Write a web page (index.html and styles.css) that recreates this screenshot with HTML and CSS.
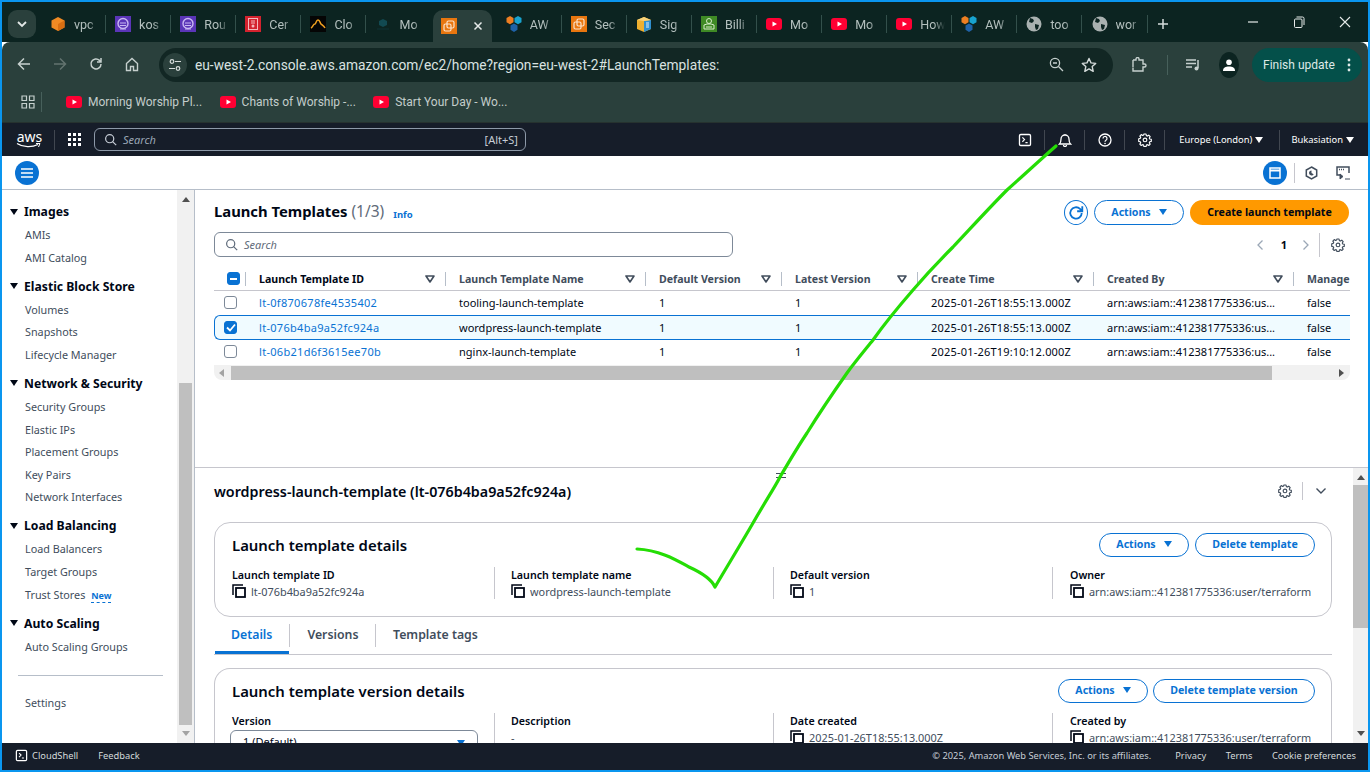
FILE: index.html
```html
<!DOCTYPE html>
<html>
<head>
<meta charset="UTF-8">
<title>Launch Templates | EC2 | eu-west-2</title>
<link rel="stylesheet" href="styles.css">
</head>
<body>

<svg class="defs" width="0" height="0">
  <symbol id="i-vpc" viewBox="0 0 16 16"><path d="M8 1l6.500 3.500v7L8 15l-6.500-3.500v-7z" fill="#f08a24"/><path d="M8 8l6.500-3.500v7L8 15z" fill="#d96f12"/></symbol>
  <symbol id="i-kos" viewBox="0 0 16 16"><rect width="16" height="16" fill="#5b35b8"/><circle cx="8" cy="7.500" r="5" fill="none" stroke="#c9b8f2" stroke-width="1.400"/><path d="M5 7h6M5 9.500h6" stroke="#c9b8f2"/><path d="M5 13h6" stroke="#c9b8f2"/></symbol>
  <symbol id="i-cer" viewBox="0 0 16 16"><rect width="16" height="16" fill="#d4222e"/><rect x="3.500" y="2.500" width="9" height="11" fill="none" stroke="#f4b8bc"/><path d="M6 5h4M6 7h4" stroke="#f4b8bc"/><circle cx="8" cy="10" r="1.500" fill="#f4b8bc"/></symbol>
  <symbol id="i-clo" viewBox="0 0 16 16"><rect width="16" height="16" fill="#050505"/><path d="M1 12c2-1 2-4 4-4 1 0 1-4 3-4s2 3 3 4 3 2 4 4" fill="none" stroke="#f0a020" stroke-width="1.500"/></symbol>
  <symbol id="i-mon" viewBox="0 0 16 16"><path d="M8 3l4 2v4l-4 2-4-2V5z" fill="#124a52"/><path d="M2 13h12" stroke="#0f3237"/></symbol>
  <symbol id="i-ec2" viewBox="0 0 16 16"><rect width="16" height="16" fill="#e8760f"/><rect x="6" y="3" width="7" height="7" rx="1.500" fill="none" stroke="#fbe3cc" stroke-width="1.200"/><rect x="3" y="6" width="7" height="7" rx="1.500" fill="none" stroke="#fbe3cc" stroke-width="1.200"/></symbol>
  <symbol id="i-aws" viewBox="0 0 16 16"><path d="M4 0l3.500 2v4.300L4 8.300.5 6.300V2z" fill="#ee7f22"/><path d="M12 0l3.500 2v4.300L12 8.300 8.500 6.300V2z" fill="#18a3cf"/><path d="M8 7.500l3.500 2v4.300L8 16l-3.500-2.200V9.500z" fill="#1f62a8"/></symbol>
  <symbol id="i-sig" viewBox="0 0 16 16"><path d="M1 4l7-3 7 3v9l-7 3-7-3z" fill="#eeb02f"/><path d="M8 5l7-1v9l-7 3z" fill="#2f8fd0"/><path d="M10 7h3M10 9h3M10 11h3" stroke="#dff0fb"/><path d="M1 4l7-3 7 3-7 1z" fill="#f7d27a"/></symbol>
  <symbol id="i-bil" viewBox="0 0 16 16"><rect width="16" height="16" fill="#3f8a25"/><circle cx="8" cy="5" r="2.500" fill="none" stroke="#d5ecc9"/><path d="M3 9l3-1h4l3 1v4H3z" fill="none" stroke="#d5ecc9"/><path d="M5 11h6" stroke="#d5ecc9"/></symbol>
  <symbol id="i-yt" viewBox="0 0 16 16"><rect y="2" width="16" height="12" rx="3" fill="#ff0033"/><path d="M6.500 5.500L11 8l-4.500 2.500z" fill="#fff"/></symbol>
  <symbol id="i-globe" viewBox="0 0 16 16"><circle cx="8" cy="8" r="7.500" fill="#a9b1b0"/><path d="M4 2l3 1 1 2-2 2-3-1zM9 8l4 1-1 4-2 1-1-3z" fill="#0c2421"/></symbol>
  <symbol id="i-gear" viewBox="0 0 16 16"><path d="M6.800 1.200h2.400l.4 1.800 1.100.5 1.600-1 1.600 1.700-1 1.500.5 1.100 1.800.4v2.400l-1.800.4-.5 1.100 1 1.600-1.600 1.600-1.600-1-1.100.5-.4 1.800H6.800l-.4-1.800-1.100-.5-1.600 1-1.600-1.600 1-1.600-.5-1.100-1.800-.4V6.500l1.800-.4.5-1.100-1-1.500 1.600-1.700 1.600 1 1.100-.5z" fill="none" stroke="currentColor" stroke-width="1.300" stroke-linejoin="round"/><circle cx="8" cy="7.900" r="2.100" fill="none" stroke="currentColor" stroke-width="1.300"/></symbol>
  <symbol id="i-search" viewBox="0 0 16 16"><circle cx="7" cy="7" r="5" fill="none" stroke="currentColor" stroke-width="1.500"/><path d="M10.600 10.600L15 15" stroke="currentColor" stroke-width="1.500"/></symbol>
  <symbol id="i-copy" viewBox="0 0 14 14"><path d="M1 11V1h10" fill="none" stroke="currentColor" stroke-width="1.500"/><rect x="4" y="4" width="9" height="9" fill="none" stroke="currentColor" stroke-width="1.800"/></symbol>
  <symbol id="i-sort" viewBox="0 0 10 8"><path d="M1 1h8L5 7z" fill="#fff" stroke="#414d5c" stroke-width="1.600" stroke-linejoin="round"/></symbol>
  <symbol id="i-term" viewBox="0 0 16 16"><rect x="1.700" y="1.700" width="12.600" height="12.600" rx="1.500" fill="none" stroke="currentColor" stroke-width="1.500"/><path d="M5 5l2.500 2.500L5 10M8.500 11H11" fill="none" stroke="currentColor" stroke-width="1.300"/></symbol>
</svg>

<div class="window">

  <div class="tabstrip">
    <div class="tab-menu"><svg width="12" height="8" viewBox="0 0 12 8"><path d="M2 2l4 4 4-4" fill="none" stroke="#e3e8e7" stroke-width="1.800"/></svg></div>
    <div class="tab"><svg class="fav"><use href="#i-vpc"/></svg><span class="tab-text">vpc</span><i class="tab-sep"></i></div>
    <div class="tab"><svg class="fav"><use href="#i-kos"/></svg><span class="tab-text">kos</span><i class="tab-sep"></i></div>
    <div class="tab"><svg class="fav"><use href="#i-kos"/></svg><span class="tab-text">Rou</span><i class="tab-sep"></i></div>
    <div class="tab"><svg class="fav"><use href="#i-cer"/></svg><span class="tab-text">Cer</span><i class="tab-sep"></i></div>
    <div class="tab"><svg class="fav"><use href="#i-clo"/></svg><span class="tab-text">Clo</span><i class="tab-sep"></i></div>
    <div class="tab"><svg class="fav"><use href="#i-mon"/></svg><span class="tab-text">Mo</span></div>
    <div class="tab tab-active"><svg class="fav"><use href="#i-ec2"/></svg><svg class="tab-x" width="10" height="10" viewBox="0 0 10 10"><path d="M1.500 1.500l7 7M8.500 1.500l-7 7" stroke="#e6ebea" stroke-width="1.500"/></svg></div>
    <div class="tab"><svg class="fav"><use href="#i-aws"/></svg><span class="tab-text">AW</span><i class="tab-sep"></i></div>
    <div class="tab"><svg class="fav"><use href="#i-ec2"/></svg><span class="tab-text">Sec</span><i class="tab-sep"></i></div>
    <div class="tab"><svg class="fav"><use href="#i-sig"/></svg><span class="tab-text">Sig</span><i class="tab-sep"></i></div>
    <div class="tab"><svg class="fav"><use href="#i-bil"/></svg><span class="tab-text">Billi</span><i class="tab-sep"></i></div>
    <div class="tab"><svg class="fav"><use href="#i-yt"/></svg><span class="tab-text">Mo</span><i class="tab-sep"></i></div>
    <div class="tab"><svg class="fav"><use href="#i-yt"/></svg><span class="tab-text">Mo</span><i class="tab-sep"></i></div>
    <div class="tab"><svg class="fav"><use href="#i-yt"/></svg><span class="tab-text">How</span><i class="tab-sep"></i></div>
    <div class="tab"><svg class="fav"><use href="#i-aws"/></svg><span class="tab-text">AW</span><i class="tab-sep"></i></div>
    <div class="tab"><svg class="fav"><use href="#i-globe"/></svg><span class="tab-text">too</span><i class="tab-sep"></i></div>
    <div class="tab"><svg class="fav"><use href="#i-globe"/></svg><span class="tab-text">wor</span><i class="tab-sep"></i></div>
    <svg class="tab-plus" width="12" height="12" viewBox="0 0 12 12"><path d="M6 1v10M1 6h10" stroke="#d5dcdb" stroke-width="1.500"/></svg>
    <div class="win-btns">
      <svg width="12" height="12" viewBox="0 0 12 12"><path d="M1 6h10" stroke="#e6ebea" stroke-width="1.200"/></svg>
      <svg width="12" height="12" viewBox="0 0 12 12"><rect x="1.500" y="3" width="7.500" height="8.500" rx="1" fill="none" stroke="#e6ebea"/><path d="M3.500 1h6a1.500 1.500 0 0 1 1.500 1.500V9" fill="none" stroke="#e6ebea"/></svg>
      <svg width="12" height="12" viewBox="0 0 12 12"><path d="M1 1l10 10M11 1L1 11" stroke="#e6ebea" stroke-width="1.100"/></svg>
    </div>
  </div>

  <div class="toolbar">
    <div class="nav-btns">
      <svg width="14" height="14" viewBox="0 0 14 14"><path d="M13 7H2M7 1.500L1.500 7 7 12.500" fill="none" stroke="#c6d0ce" stroke-width="1.500"/></svg>
      <svg width="14" height="14" viewBox="0 0 14 14"><path d="M1 7h11M7 1.500L12.500 7 7 12.500" fill="none" stroke="#63736f" stroke-width="1.500"/></svg>
      <svg width="14" height="14" viewBox="0 0 14 14"><path d="M12 7a5 5 0 1 1-1.500-3.600L12 5M12 1v4H8" fill="none" stroke="#c6d0ce" stroke-width="1.500"/></svg>
      <svg width="14" height="15" viewBox="0 0 14 15"><path d="M1.500 6.500L7 1.500l5.500 5v7h-4v-4h-3v4h-4z" fill="none" stroke="#c6d0ce" stroke-width="1.400"/></svg>
    </div>
    <div class="omnibox">
      <div class="tune"><svg width="14" height="14" viewBox="0 0 14 14"><circle cx="4" cy="3.500" r="1.800" fill="none" stroke="#d5dcdb" stroke-width="1.200"/><path d="M7 3.500h6M1 10.500h6" stroke="#d5dcdb" stroke-width="1.200"/><circle cx="10" cy="10.500" r="1.800" fill="none" stroke="#d5dcdb" stroke-width="1.200"/></svg></div>
      <span class="url">eu-west-2.console.aws.amazon.com/ec2/home?region=eu-west-2#LaunchTemplates:</span>
      <svg class="omni-zoom" width="15" height="15" viewBox="0 0 15 15"><circle cx="6" cy="6" r="4.600" fill="none" stroke="#c6d0ce" stroke-width="1.300"/><path d="M9.500 9.500L14 14M4 6h4" stroke="#c6d0ce" stroke-width="1.300"/></svg>
      <svg class="omni-star" width="16" height="16" viewBox="0 0 16 16"><path d="M8 1.500l2 4.400 4.700.5-3.500 3.200 1 4.700L8 11.900l-4.200 2.400 1-4.700L1.300 6.400 6 5.900z" fill="none" stroke="#d5dcdb" stroke-width="1.400" stroke-linejoin="round"/></svg>
    </div>
    <svg class="ext" width="16" height="16" viewBox="0 0 16 16"><path d="M2 3h3V2a1.500 1.500 0 0 1 3 0v1h4v4h1.500a1.500 1.500 0 0 1 0 3H12v4H2v-3.500M2 3v7" fill="none" stroke="#c6d0ce" stroke-width="1.400"/></svg>
    <i class="tool-sep"></i>
    <svg class="media" width="16" height="14" viewBox="0 0 16 14"><path d="M1 2h10M1 5.500h10M1 9h6" stroke="#c6d0ce" stroke-width="1.300"/><path d="M13 2v8" stroke="#c6d0ce" stroke-width="1.500"/><circle cx="11.500" cy="10.500" r="2" fill="#c6d0ce"/></svg>
    <div class="avatar"><svg width="12" height="12" viewBox="0 0 12 12"><circle cx="6" cy="3.200" r="2.800" fill="#fff"/><path d="M0 12c0-3.500 2.500-4.500 6-4.500s6 1 6 4.500z" fill="#fff"/></svg></div>
    <div class="finish"><span>Finish update</span><svg width="4" height="14" viewBox="0 0 4 14"><circle cx="2" cy="2" r="1.400" fill="#dfe9e7"/><circle cx="2" cy="7" r="1.400" fill="#dfe9e7"/><circle cx="2" cy="12" r="1.400" fill="#dfe9e7"/></svg></div>
  </div>

  <div class="bookmarks">
    <svg class="apps" width="14" height="14" viewBox="0 0 14 14"><path d="M1 1h4.500v4.500H1zM8.500 1H13v4.500H8.500zM1 8.500h4.500V13H1zM8.500 8.500H13V13H8.500z" fill="none" stroke="#c6d0ce" stroke-width="1.200"/></svg>
    <i class="book-sep"></i>
    <div class="book"><svg class="fav"><use href="#i-yt"/></svg>Morning Worship Pl...</div>
    <div class="book"><svg class="fav"><use href="#i-yt"/></svg>Chants of Worship -...</div>
    <div class="book"><svg class="fav"><use href="#i-yt"/></svg>Start Your Day - Wo...</div>
  </div>

  <div class="awsbar">
    <div class="aws-logo"><span>aws</span><svg width="25" height="5" viewBox="0 0 25 5"><path d="M1 0.500c6 4 15 4 21 1" fill="none" stroke="#fff" stroke-width="1.200"/><path d="M20 0.500h4l-1.500 3.500" fill="none" stroke="#fff"/></svg></div>
    <i class="aws-sep aws-sep-logo"></i>
    <svg class="aws-grid" width="13" height="13" viewBox="0 0 13 13"><path d="M0 0h3v3H0zM5 0h3v3H5zM10 0h3v3h-3zM0 5h3v3H0zM5 5h3v3H5zM10 5h3v3h-3zM0 10h3v3H0zM5 10h3v3H5zM10 10h3v3h-3z" fill="#fff"/></svg>
    <div class="aws-search"><svg width="13" height="13"><use href="#i-search"/></svg><em>Search</em><span>[Alt+S]</span></div>
    <div class="aws-right">
      <svg class="aws-ic" width="14" height="14"><use href="#i-term"/></svg>
      <i class="aws-sep"></i>
      <svg class="aws-ic" width="14" height="14" viewBox="0 0 14 14"><path d="M1.500 11h11c-1.500-1.500-1.500-3-1.500-5a4 4 0 0 0-8 0c0 2 0 3.500-1.500 5zM5.500 12a1.500 1.500 0 0 0 3 0M7 2V1" fill="none" stroke="#fff" stroke-width="1.300"/></svg>
      <i class="aws-sep"></i>
      <svg class="aws-ic" width="14" height="14" viewBox="0 0 14 14"><circle cx="7" cy="7" r="6" fill="none" stroke="#fff" stroke-width="1.300"/><path d="M5 5.500a2 2 0 1 1 3 1.700c-.7.400-1 .8-1 1.600" fill="none" stroke="#fff" stroke-width="1.200"/><circle cx="7" cy="10.500" r=".8" fill="#fff"/></svg>
      <i class="aws-sep"></i>
      <svg class="aws-ic" width="14" height="14"><use href="#i-gear"/></svg>
      <i class="aws-sep"></i>
      <span class="aws-region">Europe (London)</span><i class="tri tri-white"></i>
      <i class="aws-sep aws-sep-user"></i>
      <span class="aws-user">Bukasiation</span><i class="tri tri-white"></i>
    </div>
  </div>

  <div class="subbar">
    <div class="round-btn"><svg width="12" height="10" viewBox="0 0 12 10"><path d="M0 1h12M0 5h12M0 9h12" stroke="#fff" stroke-width="1.600"/></svg></div>
    <div class="subbar-right">
      <div class="round-btn"><svg width="12" height="12" viewBox="0 0 12 12"><rect x="1" y="1" width="10" height="10" fill="none" stroke="#fff" stroke-width="1.500"/><path d="M1 3.500h10" stroke="#fff" stroke-width="2"/></svg></div>
      <i class="sub-sep"></i>
      <svg class="sub-hex" width="13" height="14" viewBox="0 0 13 14"><path d="M6.500 1l5.200 3v6l-5.200 3-5.200-3V4z" fill="none" stroke="#414d5c" stroke-width="1.500"/><path d="M6.500 4.500a2.500 2.500 0 1 0 2.200 3.700L6.500 7z" fill="#414d5c"/></svg>
      <svg class="sub-mon" width="14" height="14" viewBox="0 0 14 14"><path d="M4 9H1V1h12v6" fill="none" stroke="#414d5c" stroke-width="1.500"/><path d="M3 3.500h5" stroke="#414d5c" stroke-width="1.500" stroke-dasharray="1 1"/><path d="M4 8l3 2.500L4 13zM9 13h5" fill="#414d5c" stroke="#414d5c"/></svg>
    </div>
  </div>

  <div class="main">
    <div class="side">
      <div class="side-nav">
        <div class="side-head"><i class="tri"></i>Images</div>
        <div class="side-item">AMIs</div>
        <div class="side-item">AMI Catalog</div>
        <div class="side-head"><i class="tri"></i>Elastic Block Store</div>
        <div class="side-item">Volumes</div>
        <div class="side-item">Snapshots</div>
        <div class="side-item">Lifecycle Manager</div>
        <div class="side-head"><i class="tri"></i>Network &amp; Security</div>
        <div class="side-item">Security Groups</div>
        <div class="side-item">Elastic IPs</div>
        <div class="side-item">Placement Groups</div>
        <div class="side-item">Key Pairs</div>
        <div class="side-item">Network Interfaces</div>
        <div class="side-head"><i class="tri"></i>Load Balancing</div>
        <div class="side-item">Load Balancers</div>
        <div class="side-item">Target Groups</div>
        <div class="side-item">Trust Stores <a class="side-new">New</a></div>
        <div class="side-head"><i class="tri"></i>Auto Scaling</div>
        <div class="side-item">Auto Scaling Groups</div>
        <hr class="side-rule">
        <div class="side-item">Settings</div>
      </div>
      <div class="vscroll vscroll-side"><i class="arrow-up"></i><div class="vthumb"></div><i class="arrow-down"></i></div>
    </div>

    <div class="panes">
      <div class="pane-top">
        <div class="list-head">
          <h1 class="list-title">Launch Templates <span>(1/3)</span></h1>
          <a class="info">Info</a>
          <div class="list-btns">
            <div class="btn-refresh"><svg width="16" height="16" viewBox="0 0 14 14"><path d="M12 7a5 5 0 1 1-1.500-3.600L12 5M12.500 1v4.500H8" fill="none" stroke="#0972d3" stroke-width="1.600"/></svg></div>
            <div class="btn btn-act">Actions<i class="tri tri-blue"></i></div>
            <div class="btn btn-create">Create launch template</div>
          </div>
        </div>
        <div class="list-tools">
          <div class="filter"><svg width="13" height="13"><use href="#i-search"/></svg><em>Search</em></div>
          <div class="pager">
            <svg width="8" height="12" viewBox="0 0 8 12"><path d="M6.500 1.500L2 6l4.500 4.500" fill="none" stroke="#9ba7b6" stroke-width="1.300"/></svg>
            <b>1</b>
            <svg width="8" height="12" viewBox="0 0 8 12"><path d="M1.500 1.500L6 6l-4.500 4.500" fill="none" stroke="#9ba7b6" stroke-width="1.300"/></svg>
            <i class="pager-sep"></i>
            <svg class="pager-gear" width="14" height="14"><use href="#i-gear"/></svg>
          </div>
        </div>

        <div class="tbl">
          <div class="tr th">
            <div class="cell cell-check"><i class="check check-on check-dash"></i></div>
            <div class="cell"><span class="cell-main cell-dark">Launch Template ID</span><svg class="sort"><use href="#i-sort"/></svg></div>
            <div class="cell"><span class="cell-main">Launch Template Name</span><svg class="sort"><use href="#i-sort"/></svg></div>
            <div class="cell"><span class="cell-main">Default Version</span><svg class="sort"><use href="#i-sort"/></svg></div>
            <div class="cell"><span class="cell-main">Latest Version</span><svg class="sort"><use href="#i-sort"/></svg></div>
            <div class="cell"><span class="cell-main">Create Time</span><svg class="sort"><use href="#i-sort"/></svg></div>
            <div class="cell"><span class="cell-main">Created By</span><svg class="sort"><use href="#i-sort"/></svg></div>
            <div class="cell cell-last"><span class="cell-main">Manage</span></div>
          </div>
          <div class="tr">
            <div class="cell cell-check"><i class="check"></i></div>
            <div class="cell"><a class="cell-id">lt-0f870678fe4535402</a></div>
            <div class="cell">tooling-launch-template</div>
            <div class="cell">1</div>
            <div class="cell">1</div>
            <div class="cell cell-date">2025-01-26T18:55:13.000Z</div>
            <div class="cell">arn:aws:iam::412381775336:us...</div>
            <div class="cell cell-last">false</div>
          </div>
          <div class="tr tr-sel">
            <div class="cell cell-check"><i class="check check-on"><svg width="10" height="9" viewBox="0 0 10 9"><path d="M1 4.500l3 3 5-6" fill="none" stroke="#fff" stroke-width="1.800"/></svg></i></div>
            <div class="cell"><a class="cell-id">lt-076b4ba9a52fc924a</a></div>
            <div class="cell">wordpress-launch-template</div>
            <div class="cell">1</div>
            <div class="cell">1</div>
            <div class="cell cell-date">2025-01-26T18:55:13.000Z</div>
            <div class="cell">arn:aws:iam::412381775336:us...</div>
            <div class="cell cell-last">false</div>
          </div>
          <div class="tr">
            <div class="cell cell-check"><i class="check"></i></div>
            <div class="cell"><a class="cell-id">lt-06b21d6f3615ee70b</a></div>
            <div class="cell">nginx-launch-template</div>
            <div class="cell">1</div>
            <div class="cell">1</div>
            <div class="cell cell-date">2025-01-26T19:10:12.000Z</div>
            <div class="cell">arn:aws:iam::412381775336:us...</div>
            <div class="cell cell-last">false</div>
          </div>
          <div class="hscroll"><i class="arrow-left"></i><div class="hthumb"></div><i class="arrow-right"></i></div>
        </div>
      </div>

      <div class="pane-bottom">
        <div class="pane-handle"></div>
        <div class="detail">
          <div class="detail-head">
            <h2>wordpress-launch-template (lt-076b4ba9a52fc924a)</h2>
            <svg class="detail-gear" width="14" height="14"><use href="#i-gear"/></svg>
            <i class="detail-sep"></i>
            <svg width="12" height="8" viewBox="0 0 12 8"><path d="M1.500 1.500L6 6l4.500-4.500" fill="none" stroke="#414d5c" stroke-width="1.400"/></svg>
          </div>

          <div class="card">
            <div class="card-head">
              <h3>Launch template details</h3>
              <div class="btn btn-act btn-small">Actions<i class="tri tri-blue"></i></div>
              <div class="btn btn-act btn-small btn-del">Delete template</div>
            </div>
            <div class="kv-row">
              <div class="kv"><div class="kv-label">Launch template ID</div><div class="kv-val"><svg><use href="#i-copy"/></svg>lt-076b4ba9a52fc924a</div></div>
              <div class="kv"><div class="kv-label">Launch template name</div><div class="kv-val"><svg><use href="#i-copy"/></svg>wordpress-launch-template</div></div>
              <div class="kv"><div class="kv-label">Default version</div><div class="kv-val"><svg><use href="#i-copy"/></svg>1</div></div>
              <div class="kv"><div class="kv-label">Owner</div><div class="kv-val"><svg><use href="#i-copy"/></svg>arn:aws:iam::412381775336:user/terraform</div></div>
            </div>
          </div>

          <div class="dtabs">
            <div class="dtab dtab-on">Details</div>
            <div class="dtab">Versions</div>
            <div class="dtab dtab-end">Template tags</div>
          </div>

          <div class="card card-version">
            <div class="card-head">
              <h3>Launch template version details</h3>
              <div class="btn btn-act btn-small">Actions<i class="tri tri-blue"></i></div>
              <div class="btn btn-act btn-small btn-del">Delete template version</div>
            </div>
            <div class="kv-row">
              <div class="kv"><div class="kv-label">Version</div><div class="select">1 (Default)<i class="tri tri-blue"></i></div></div>
              <div class="kv"><div class="kv-label">Description</div><div class="kv-val">-</div></div>
              <div class="kv"><div class="kv-label">Date created</div><div class="kv-val"><svg><use href="#i-copy"/></svg>2025-01-26T18:55:13.000Z</div></div>
              <div class="kv"><div class="kv-label">Created by</div><div class="kv-val"><svg><use href="#i-copy"/></svg>arn:aws:iam::412381775336:user/terraform</div></div>
            </div>
          </div>
        </div>
        <div class="vscroll vscroll-detail"><i class="arrow-up"></i><div class="vthumb"></div><i class="arrow-down"></i></div>
      </div>
    </div>
  </div>

  <div class="footer">
    <svg class="foot-term" width="13" height="13"><use href="#i-term"/></svg>
    <span class="foot-cloud">CloudShell</span>
    <span>Feedback</span>
    <span class="foot-copy">© 2025, Amazon Web Services, Inc. or its affiliates.</span>
    <span class="foot-link">Privacy</span>
    <span class="foot-link">Terms</span>
    <span class="foot-link">Cookie preferences</span>
  </div>
</div>

<!-- hand drawn annotation on top of the screenshot -->
<svg class="scribble" width="1370" height="772" viewBox="0 0 1370 772">
  <path d="M637 549C660 550 678 561 689 567C700 572 711 578 715 587C728 565 745 537 753 523C765 502 775 487 780 477C790 460 797 448 807 433C820 412 835 390 847 373C855 362 865 350 873 340C885 323 900 305 913 290C925 276 940 260 953 247C970 229 990 207 1007 190C1025 174 1040 160 1056 146" fill="none" stroke="#25dd05" stroke-width="3.200" stroke-linecap="round" stroke-linejoin="round"/>
</svg>

</body>
</html>
```

FILE: styles.css
```css
html, body{
  margin:0;
  padding:0;
  height:100%;
  overflow:hidden;
}
body{
  position:relative;
  font-family:"Noto Sans", "Open Sans", sans-serif;
  font-size:11px;
  color:#000716;
  background:#fff;
}
i{
  font-style:normal;
  display:block;
}
h1, h2, h3{
  margin:0;
}
.defs{
  position:absolute;
}
.window{
  height:772px;
  box-sizing:border-box;
  border:2px solid #0a96ef;
  display:flex;
  flex-direction:column;
  overflow:hidden;
}
.scribble{
  position:absolute;
  left:0;
  top:0;
  pointer-events:none;
}

/* triangles used all over the console */
.tri{
  width:0;
  height:0;
  border-left:4.5px solid transparent;
  border-right:4.5px solid transparent;
  border-top:6px solid #000716;
  flex:none;
}
.tri-white{
  border-top-color:#fff;
}
.tri-blue{
  border-top-color:#0972d3;
}

/* browser tabs */
.tabstrip{
  height:40px;
  flex:none;
  background:#0c2421;
  display:flex;
  align-items:center;
  font-family:Roboto, sans-serif;
  font-size:12.5px;
  color:#b4c0be;
}
.tab-menu{
  width:28px;
  height:28px;
  margin:3px 6px 0 6px;
  border-radius:9px;
  background:#2a403c;
  display:flex;
  align-items:center;
  justify-content:center;
  flex:none;
}
.tab{
  width:65.1px;
  height:100%;
  box-sizing:border-box;
  padding:4px 0 0 8px;
  display:flex;
  align-items:center;
  flex:none;
}
.fav{
  width:16px;
  height:16px;
  flex:none;
}
.tab-text{
  width:25px;
  margin-left:8px;
  overflow:hidden;
  white-space:nowrap;
  -webkit-mask-image:linear-gradient(90deg, #000 55%, transparent);
  mask-image:linear-gradient(90deg, #000 55%, transparent);
}
.tab-sep{
  width:1px;
  height:18px;
  margin-left:6px;
  background:#33504b;
}
.tab-active{
  width:59.100px;
  margin-right:6px;
  margin-top:8px;
  height:32px;
  padding-top:0;
  background:#2a403c;
  border-radius:10px 10px 0 0;
}
.tab-x{
  margin-left:16px;
}
.tab-plus{
  margin-left:8px;
  margin-top:3px;
}
.win-btns{
  margin-left:auto;
  width:104px;
  margin-right:17px;
  display:flex;
  justify-content:space-between;
}

/* browser toolbar */
.toolbar{
  height:41px;
  flex:none;
  background:#2a403c;
  border-radius:8px 8px 0 0;
  display:flex;
  align-items:center;
  padding-top:4px;
  box-sizing:border-box;
  font-family:Roboto, sans-serif;
}
.nav-btns{
  width:157px;
  padding-left:15px;
  padding-right:20px;
  box-sizing:border-box;
  display:flex;
  justify-content:space-between;
  flex:none;
}
.omnibox{
  width:954px;
  height:34px;
  flex:none;
  background:#122724;
  border-radius:17px;
  display:flex;
  align-items:center;
  color:#d9e2e0;
  font-size:13.750px;
}
.tune{
  width:24px;
  height:24px;
  margin-left:4px;
  border-radius:50%;
  background:#2a403c;
  display:flex;
  align-items:center;
  justify-content:center;
  flex:none;
}
.url{
  margin-left:8px;
  white-space:nowrap;
}
.omni-zoom{
  margin-left:auto;
}
.omni-star{
  margin:0 16px 0 17px;
}
.ext{
  margin-left:18px;
  flex:none;
}
.tool-sep{
  width:1px;
  height:20px;
  margin-left:20px;
  background:#47605b;
}
.media{
  margin-left:17px;
  flex:none;
}
.avatar{
  width:20px;
  height:26px;
  margin-left:18px;
  border-radius:50%;
  background:#0c2421;
  display:flex;
  align-items:center;
  justify-content:center;
  flex:none;
}
.finish{
  width:110px;
  height:34px;
  margin-left:13px;
  box-sizing:border-box;
  padding:0 11px;
  border-radius:17px;
  background:#04504a;
  color:#dfe9e7;
  font-size:12px;
  display:flex;
  align-items:center;
  justify-content:space-between;
  flex:none;
}

/* browser bookmarks */
.bookmarks{
  height:40px;
  flex:none;
  background:#2a403c;
  display:flex;
  align-items:center;
  font-family:Roboto, sans-serif;
  font-size:12px;
  color:#c3cdcb;
  box-sizing:border-box;
  border-bottom:1px solid #26322f;
  padding-bottom:2px;
}
.apps{
  margin-left:19px;
  flex:none;
}
.book-sep{
  width:1px;
  height:20px;
  margin:0 24px 0 6px;
  background:#47605b;
}
.book{
  display:flex;
  align-items:center;
  width:153.600px;
  white-space:nowrap;
}
.book .fav{
  margin-right:6px;
}

/* aws console header */
.awsbar{
  height:33px;
  flex:none;
  background:#161d29;
  display:flex;
  align-items:center;
  color:#fff;
}
.aws-logo{
  width:27px;
  margin-left:14px;
  line-height:10px;
  font-size:14px;
  flex:none;
  text-align:center;
}
.aws-logo span{
  display:block;
  height:11px;
}
.aws-logo svg{
  display:block;
}
.aws-sep{
  width:1px;
  height:20px;
  background:#414750;
  flex:none;
}
.aws-sep-logo{
  margin-left:11px;
}
.aws-grid{
  margin-left:13px;
  flex:none;
}
.aws-search{
  width:432px;
  height:23px;
  margin-left:13px;
  box-sizing:border-box;
  border:1px solid #8d99a8;
  border-radius:6px;
  display:flex;
  align-items:center;
  padding:0 7px 1px 9px;
  color:#c6cdd6;
}
.aws-search em{
  margin-left:6px;
  color:#9ba7b6;
}
.aws-search span{
  margin-left:auto;
}
.aws-right{
  margin-left:auto;
  display:flex;
  align-items:center;
  padding-right:14px;
  font-size:9.400px;
}
.aws-ic{
  margin:0 12.500px;
  flex:none;
}
.aws-region{
  margin-left:14px;
  margin-right:3px;
}
.aws-sep-user{
  margin-left:16px;
}
.aws-user{
  margin-left:11px;
  margin-right:3px;
}

/* console sub header */
.subbar{
  height:34px;
  flex:none;
  box-sizing:border-box;
  border-bottom:1px solid #b6bec9;
  display:flex;
  align-items:center;
  padding:0 18px 0 13px;
}
.round-btn{
  width:24px;
  height:24px;
  border-radius:50%;
  background:#0972d3;
  display:flex;
  align-items:center;
  justify-content:center;
  flex:none;
}
.subbar-right{
  margin-left:auto;
  display:flex;
  align-items:center;
}
.sub-sep{
  width:1px;
  height:20px;
  margin:0 10px 0 7px;
  background:#c6c6cd;
}
.sub-mon{
  margin-left:18px;
}

/* main split */
.main{
  flex:1;
  min-height:0;
  display:flex;
}
.side{
  width:193px;
  flex:none;
  box-sizing:border-box;
  border-right:1px solid #b6bec9;
  display:flex;
}
.side-nav{
  flex:1;
  padding-top:9px;
  color:#414d5c;
  white-space:nowrap;
  font-size:10.800px;
}
.side-head{
  height:25px;
  line-height:25px;
  font-size:12.200px;
  font-weight:700;
  color:#000716;
  display:flex;
  align-items:center;
  margin-top:4.500px;
}
.side-head:first-child{
  margin-top:0;
}
.side-head .tri{
  margin:0 6px 0 8px;
}
.side-item{
  height:22.600px;
  line-height:22.600px;
  padding-left:23px;
}
.side-new{
  margin-left:3px;
  color:#0972d3;
  font-size:9px;
  font-weight:700;
  border-bottom:1px dashed #0972d3;
}
.side-rule{
  margin:16.500px 14px 16px 16px;
  border:none;
  border-top:1px solid #b6bec9;
}
.vscroll{
  background:#f1f1f1;
  display:flex;
  flex-direction:column;
  align-items:center;
  flex:none;
  box-sizing:border-box;
}
.vscroll-side{
  width:17px;
}
.vscroll-detail{
  width:15px;
  margin-left:auto;
}
.vthumb{
  width:13px;
  background:#bfbfbf;
}
.vscroll-side .vthumb{
  height:342px;
  margin-top:181px;
}
.vscroll-detail .vthumb{
  height:143px;
  margin-top:5px;
  width:100%;
}
.arrow-up, .arrow-down{
  width:0;
  height:0;
  border-left:4px solid transparent;
  border-right:4px solid transparent;
  flex:none;
}
.arrow-up{
  border-bottom:5px solid #505050;
  margin-top:7px;
}
.arrow-down{
  border-top:5px solid #a3a3a3;
  margin-top:auto;
  margin-bottom:7px;
}
.vscroll-detail .arrow-down{
  border-top-color:#505050;
}
.panes{
  flex:1;
  min-width:0;
  display:flex;
  flex-direction:column;
}

/* launch template list */
.pane-top{
  height:278px;
  flex:none;
  box-sizing:border-box;
  padding:10px 18px 0 19px;
  border-bottom:1px solid #c6c6cd;
}
.list-head{
  height:25px;
  display:flex;
  align-items:center;
}
.list-title{
  font-size:14.800px;
  line-height:23px;
  font-weight:700;
  white-space:nowrap;
  margin-bottom:2px;
}
.list-title span{
  font-size:15.500px;
  font-weight:400;
  color:#5f6b7a;
}
.info{
  margin-left:9px;
  margin-top:3px;
  color:#0972d3;
  font-size:9.500px;
  font-weight:700;
}
.list-btns{
  margin-left:auto;
  margin-right:1px;
  display:flex;
  align-items:center;
}
.btn-refresh{
  width:24px;
  height:25px;
  box-sizing:border-box;
  border:1px solid #0972d3;
  border-radius:50%;
  display:flex;
  align-items:center;
  justify-content:center;
  margin-right:6px;
}
.btn{
  height:25px;
  box-sizing:border-box;
  border-radius:13px;
  padding-bottom:1px;
  font-size:10.600px;
  font-weight:700;
  display:flex;
  align-items:center;
  justify-content:center;
  white-space:nowrap;
}
.btn-act{
  width:90px;
  border:1px solid #0972d3;
  color:#0972d3;
  gap:8px;
}
.btn-create{
  width:159px;
  margin-left:6px;
  background:#ff9900;
  color:#000716;
}
.list-tools{
  height:25px;
  margin-top:7px;
  display:flex;
  align-items:center;
}
.filter{
  width:519px;
  height:25px;
  box-sizing:border-box;
  border:1px solid #7d8998;
  border-radius:6px;
  display:flex;
  align-items:center;
  padding:0 0 1px 10px;
  color:#5f6b7a;
}
.filter em{
  margin-left:6px;
}
.pager{
  margin-left:auto;
  display:flex;
  align-items:center;
  color:#414d5c;
}
.pager b{
  margin:0 15px 0 17px;
  color:#000716;
}
.pager-sep{
  width:1px;
  height:24px;
  margin-left:9px;
  background:#c6c6cd;
}
.pager-gear{
  margin-left:11px;
  margin-right:5px;
}
.tbl{
  margin-top:6px;
  white-space:nowrap;
}
.tr{
  display:grid;
  grid-template-columns:31px 200px 200px 136px 136px 176px 200px 57px;
  height:24px;
  align-items:center;
}
.th{
  height:28px;
  border-bottom:1px solid #c6c6cd;
  font-size:10.600px;
  font-weight:700;
  color:#414d5c;
  padding-top:4px;
  box-sizing:border-box;
}
.tr-sel{
  height:25px;
  grid-template-columns:30px 200px 200px 136px 136px 176px 200px 57px;
  border:1px solid #0972d3;
  border-right:none;
  border-radius:6px 0 0 6px;
  background:#f0fbff;
  box-sizing:border-box;
}
.cell{
  padding-left:14px;
  padding-bottom:1px;
  box-sizing:border-box;
  display:flex;
  align-items:center;
  overflow:hidden;
  height:100%;
}
.tr-sel .cell{
  padding-bottom:0;
}
.th .cell{
  height:14px;
  border-left:1px solid #b6bec9;
  padding-left:13px;
  padding-bottom:0;
}
.th .cell-check{
  border-left:none;
}
.cell-check{
  padding-left:10px;
}
.tr-sel .cell-check{
  padding-left:9px;
}
.cell-main{
  flex:1;
}
.cell-dark{
  color:#000716;
}
.cell-id{
  letter-spacing:.3px;
}
.cell-date{
  letter-spacing:.2px;
}
.sort{
  width:10px;
  height:8px;
  margin-right:10px;
  flex:none;
}
.cell a{
  color:#0972d3;
}
.check{
  width:13px;
  height:13px;
  box-sizing:border-box;
  border:1.500px solid #7d8998;
  border-radius:3px;
  background:#fff;
  flex:none;
  display:flex;
  align-items:center;
  justify-content:center;
}
.check-on{
  border-color:#0972d3;
  background:#0972d3;
}
.check-dash::after{
  content:"";
  width:7px;
  height:2px;
  background:#fff;
}
.hscroll{
  height:15px;
  margin-top:1px;
  background:#f1f1f1;
  border-radius:0 0 8px 8px;
  display:flex;
  align-items:center;
}
.hthumb{
  width:1041px;
  height:14px;
  margin-left:7px;
  background:#bfbfbf;
}
.arrow-left, .arrow-right{
  width:0;
  height:0;
  border-top:4px solid transparent;
  border-bottom:4px solid transparent;
  flex:none;
}
.arrow-left{
  border-right:5px solid #a3a3a3;
  margin-left:5px;
}
.arrow-right{
  border-left:5px solid #505050;
  margin-left:auto;
  margin-right:6px;
}

/* template details */
.pane-bottom{
  flex:1;
  min-height:0;
  display:flex;
  position:relative;
  overflow:hidden;
}
.pane-handle{
  position:absolute;
  left:581px;
  top:5px;
  width:10px;
  height:5px;
  border-top:1.500px solid #414d5c;
  border-bottom:1.500px solid #414d5c;
  box-sizing:border-box;
}
.detail{
  width:1118px;
  margin-left:19px;
  flex:none;
  padding-top:13px;
}
.detail-head{
  height:20px;
  display:flex;
  align-items:center;
  padding-right:5px;
}
.detail-head h2{
  font-size:14.300px;
  font-weight:600;
  white-space:nowrap;
}
.detail-gear{
  margin-left:auto;
  color:#414d5c;
}
.detail-sep{
  width:1px;
  height:18px;
  margin:0 12px 0 10px;
  background:#c6c6cd;
}
.card{
  margin-top:21px;
  box-sizing:border-box;
  height:95px;
  border:1px solid #c6c6cd;
  border-radius:16px;
  padding:9px 16px 0 17px;
}
.card-head{
  height:25px;
  display:flex;
  align-items:center;
  gap:6px;
}
.card-head h3{
  font-size:14.900px;
  font-weight:600;
  margin-right:auto;
  white-space:nowrap;
}
.btn-small{
  height:24px;
}
.btn-del{
  width:120px;
}
.card-version .card-head{
  gap:5px;
}
.card-version .btn-del{
  width:162px;
}
.kv-row{
  display:grid;
  grid-template-columns:263px 279px 280px 1fr;
  margin-top:10px;
  margin-left:-17px;
  padding-left:17px;
  white-space:nowrap;
}
.kv{
  height:32px;
  border-right:1px solid #c6c6cd;
  padding-left:16px;
  overflow:visible;
}
.kv:first-child{
  padding-left:0;
}
.kv:nth-child(3){
  margin-right:1px;
}
.kv:last-child{
  border-right:none;
}
.kv-label{
  font-size:10.700px;
  font-weight:600;
  height:17px;
  line-height:17px;
}
.kv-val{
  display:flex;
  align-items:center;
  height:16px;
  margin-top:-1px;
  font-size:10.900px;
  color:#414d5c;
}
.kv-val svg{
  width:14px;
  height:14px;
  margin-right:5px;
  color:#000716;
  flex:none;
}
.dtabs{
  height:38px;
  margin-top:0;
  border-bottom:1px solid #c6c6cd;
  display:flex;
  align-items:flex-start;
  font-size:12.300px;
  font-weight:600;
  color:#414d5c;
  padding-top:7px;
  box-sizing:border-box;
}
.dtab{
  height:23px;
  line-height:22px;
  padding:0 16px 0 17.500px;
  border-right:1px solid #c6c6cd;
  white-space:nowrap;
}
.dtab-end{
  border-right:none;
}
.dtab-on{
  color:#0972d3;
  padding-left:17px;
  padding-right:16.500px;
  position:relative;
}
.dtab-on::after{
  content:"";
  position:absolute;
  left:1px;
  right:0;
  top:27px;
  height:3px;
  background:#0972d3;
}
.card-version{
  margin-top:13px;
  height:120px;
  border-bottom:none;
}
.select{
  width:248px;
  height:28px;
  margin-left:-2px;
  margin-top:0;
  box-sizing:border-box;
  border:1px solid #7d8998;
  border-radius:6px;
  padding:3px 12px 0 12px;
  display:flex;
  justify-content:space-between;
  align-items:flex-start;
}
.select .tri{
  margin-top:6px;
}

/* console footer */
.footer{
  height:27px;
  flex:none;
  box-sizing:border-box;
  padding-bottom:3px;
  background:#161d29;
  color:#d5dbdb;
  font-size:9.300px;
  display:flex;
  align-items:center;
  white-space:nowrap;
}
.foot-term{
  margin-left:13px;
  color:#fff;
}
.foot-cloud{
  margin-left:4px;
  margin-right:20px;
}
.foot-copy{
  margin-left:auto;
  margin-right:24px;
  color:#c6cdd6;
}
.foot-link{
  margin-right:19.500px;
}
.foot-link:last-child{
  margin-right:12px;
}
```
